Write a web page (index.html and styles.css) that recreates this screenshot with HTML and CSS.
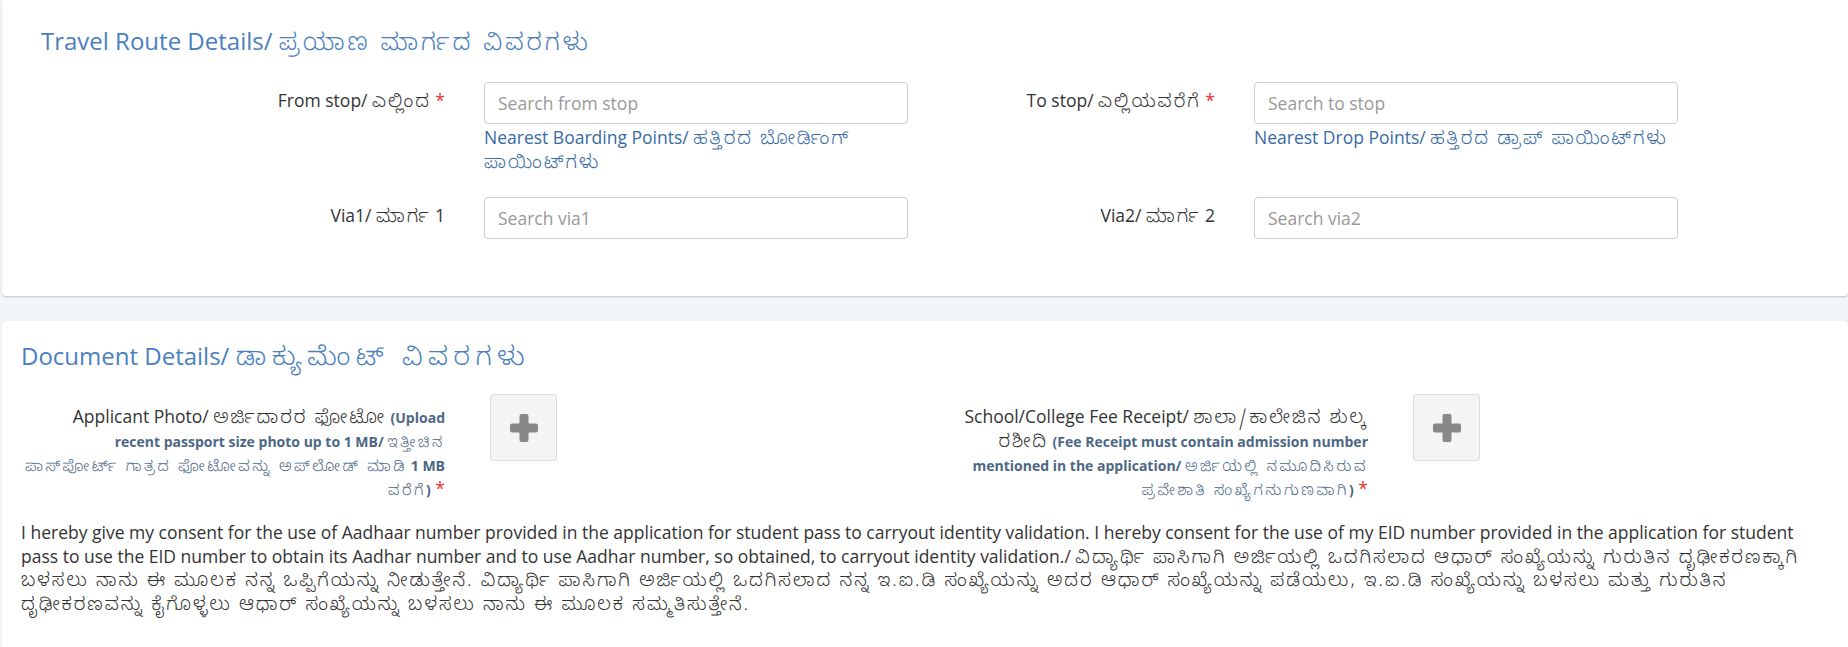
FILE: index.html
```html
<!DOCTYPE html>
<html lang="en">
<head>
<meta charset="utf-8">
<title>Student Pass - Route and Documents</title>
<link rel="stylesheet" href="styles.css">
</head>
<body>
<div class="page">
  <section class="card card-route">
    <h3 class="card-title">Travel Route Details/ <span class="kn">ಪ್ರಯಾಣ ಮಾರ್ಗದ ವಿವರಗಳು</span></h3>
    <div class="route-grid">
      <label class="field-label">From stop/ <span class="kn">ಎಲ್ಲಿಂದ</span> <span class="req">*</span></label>
      <div class="field">
        <input class="text-input" type="text" placeholder="Search from stop">
        <a class="hint" href="#">Nearest Boarding Points/ <span class="kn">ಹತ್ತಿರದ ಬೋರ್ಡಿಂಗ್<br>ಪಾಯಿಂಟ್‌ಗಳು</span></a>
      </div>
      <label class="field-label">To stop/ <span class="kn">ಎಲ್ಲಿಯವರೆಗೆ</span> <span class="req">*</span></label>
      <div class="field">
        <input class="text-input" type="text" placeholder="Search to stop">
        <a class="hint" href="#">Nearest Drop Points/ <span class="kn">ಹತ್ತಿರದ ಡ್ರಾಪ್ ಪಾಯಿಂಟ್‌ಗಳು</span></a>
      </div>
      <label class="field-label">Via1/ <span class="kn">ಮಾರ್ಗ</span> 1</label>
      <div class="field">
        <input class="text-input" type="text" placeholder="Search via1">
      </div>
      <label class="field-label">Via2/ <span class="kn">ಮಾರ್ಗ</span> 2</label>
      <div class="field">
        <input class="text-input" type="text" placeholder="Search via2">
      </div>
    </div>
  </section>

  <section class="card card-docs">
    <h3 class="card-title">Document Details/ <span class="kn kn-doc">ಡಾಕ್ಯುಮೆಂಟ್ ವಿವರಗಳು</span></h3>
    <div class="doc-row">
      <div class="doc-item">
        <label class="doc-label">Applicant Photo/ <span class="kn">ಅರ್ಜಿದಾರರ ಫೋಟೋ</span> <span class="note">(Upload<br>recent passport size photo up to 1 MB/ <span class="kn">ಇತ್ತೀಚಿನ<br>ಪಾಸ್‌ಪೋರ್ಟ್ ಗಾತ್ರದ ಫೋಟೋವನ್ನು ಅಪ್‌ಲೋಡ್ ಮಾಡಿ</span> 1 MB<br><span class="kn">ವರೆಗೆ</span>)</span> <span class="req">*</span></label>
        <button class="upload-btn" type="button" aria-label="Upload applicant photo">
          <svg class="plus" viewBox="0 0 28 28" width="28" height="28"><rect x="0" y="9.5" width="28" height="9" rx="2"/><rect x="9.5" y="0" width="9" height="28" rx="2"/></svg>
        </button>
      </div>
      <div class="doc-item">
        <label class="doc-label">School/College Fee Receipt/ <span class="kn">ಶಾಲಾ/ಕಾಲೇಜಿನ ಶುಲ್ಕ<br>ರಶೀದಿ</span> <span class="note">(Fee Receipt must contain admission number<br>mentioned in the application/ <span class="kn">ಅರ್ಜಿಯಲ್ಲಿ ನಮೂದಿಸಿರುವ<br>ಪ್ರವೇಶಾತಿ ಸಂಖ್ಯೆಗನುಗುಣವಾಗಿ</span>)</span> <span class="req">*</span></label>
        <button class="upload-btn" type="button" aria-label="Upload fee receipt">
          <svg class="plus" viewBox="0 0 28 28" width="28" height="28"><rect x="0" y="9.5" width="28" height="9" rx="2"/><rect x="9.5" y="0" width="9" height="28" rx="2"/></svg>
        </button>
      </div>
    </div>
    <p class="consent">I hereby give my consent for the use of Aadhaar number provided in the application for student pass to carryout identity validation. I hereby consent for the use of my EID number provided in the application for student<br>pass to use the EID number to obtain its Aadhar number and to use Aadhar number, so obtained, to carryout identity validation./ <span class="kn">ವಿದ್ಯಾರ್ಥಿ ಪಾಸಿಗಾಗಿ ಅರ್ಜಿಯಲ್ಲಿ ಒದಗಿಸಲಾದ ಆಧಾರ್ ಸಂಖ್ಯೆಯನ್ನು ಗುರುತಿನ ದೃಢೀಕರಣಕ್ಕಾಗಿ<br>ಬಳಸಲು ನಾನು ಈ ಮೂಲಕ ನನ್ನ ಒಪ್ಪಿಗೆಯನ್ನು ನೀಡುತ್ತೇನೆ. ವಿದ್ಯಾರ್ಥಿ ಪಾಸಿಗಾಗಿ ಅರ್ಜಿಯಲ್ಲಿ ಒದಗಿಸಲಾದ ನನ್ನ ಇ.ಐ.ಡಿ ಸಂಖ್ಯೆಯನ್ನು ಅದರ ಆಧಾರ್ ಸಂಖ್ಯೆಯನ್ನು ಪಡೆಯಲು, ಇ.ಐ.ಡಿ ಸಂಖ್ಯೆಯನ್ನು ಬಳಸಲು ಮತ್ತು ಗುರುತಿನ<br>ದೃಢೀಕರಣವನ್ನು ಕೈಗೊಳ್ಳಲು ಆಧಾರ್ ಸಂಖ್ಯೆಯನ್ನು ಬಳಸಲು ನಾನು ಈ ಮೂಲಕ ಸಮ್ಮತಿಸುತ್ತೇನೆ.</span></p>
  </section>
</div>
</body>
</html>
```

FILE: styles.css
```css
html, body {
  margin: 0;
  padding: 0;
}
body {
  background: #f3f6f9;
  font-family: "Open Sans", "Noto Sans Kannada", "Noto Sans", sans-serif;
  font-size: 17.5px;
  color: #333;
  overflow: hidden;
}
.kn {
  font-family: "Noto Sans Kannada", "Open Sans", sans-serif;
  font-size: 18.4px;
  font-weight: 350;
  letter-spacing: 2px;
  line-height: 0;
}
.page {
  padding-left: 2px;
}
.card {
  background: #fff;
  border-radius: 4px;
  box-shadow: 0 1px 2px rgba(0, 0, 0, 0.22);
}
.card-route {
  border-top-left-radius: 0;
  border-top-right-radius: 0;
  padding: 27px 0 57px 39px;
  margin-bottom: 25px;
}
.card-docs {
  padding: 21px 19px 80px 19px;
  box-shadow: 0 0 1px rgba(0, 0, 0, 0.2);
}
.card-title {
  margin: 0;
  font-size: 24px;
  line-height: 28.8px;
  font-weight: 400;
  color: #4a80c0;
}
.card-title .kn {
  font-size: inherit;
  letter-spacing: 3px;
}
.card-title .kn-doc {
  font-size: 26px;
  letter-spacing: 5.5px;
}

/* Route form */
.route-grid {
  margin-top: 26.5px;
  display: grid;
  grid-template-columns: 443px 424px 346px 424px;
  row-gap: 24px;
  align-items: start;
}
.field-label {
  text-align: right;
  padding-right: 39px;
  padding-top: 5.5px;
  line-height: 24px;
  color: #333;
}
.req {
  color: #e3342f;
}
.field {
  display: flex;
  flex-direction: column;
}
.text-input {
  box-sizing: border-box;
  width: 100%;
  height: 42px;
  border: 1px solid #ccc;
  border-radius: 4px;
  padding: 0 13px;
  font-family: "Open Sans", sans-serif;
  font-size: 17.5px;
  color: #333;
  background: #fff;
  outline: none;
}
.text-input::placeholder {
  color: #999;
}
.hint {
  margin-top: 2px;
  line-height: 23.5px;
  color: #376ba4;
  text-decoration: none;
  white-space: nowrap;
}

/* Documents */
.doc-row {
  margin-top: 23px;
  display: grid;
  grid-template-columns: 923px 1fr;
}
.doc-item {
  display: flex;
  align-items: flex-start;
}
.doc-label {
  box-sizing: border-box;
  flex: none;
  width: 424px;
  margin-right: 45px;
  padding-top: 9.5px;
  text-align: right;
  line-height: 24px;
  color: #333;
  white-space: nowrap;
}
.note {
  font-size: 14px;
  line-height: 18px;
  font-weight: 700;
  color: #4d6784;
}
.note .kn {
  font-size: 15px;
  letter-spacing: 2.6px;
}
.upload-btn {
  box-sizing: border-box;
  flex: none;
  width: 67px;
  height: 67px;
  padding: 0;
  border: 1px solid #ddd;
  border-radius: 3px;
  background: #f4f4f4;
  display: flex;
  align-items: center;
  justify-content: center;
  cursor: pointer;
}
.plus {
  display: block;
  fill: #888;
}
.consent {
  margin: 21.5px 0 0;
  line-height: 23.6px;
  color: #333;
  white-space: nowrap;
}
```
